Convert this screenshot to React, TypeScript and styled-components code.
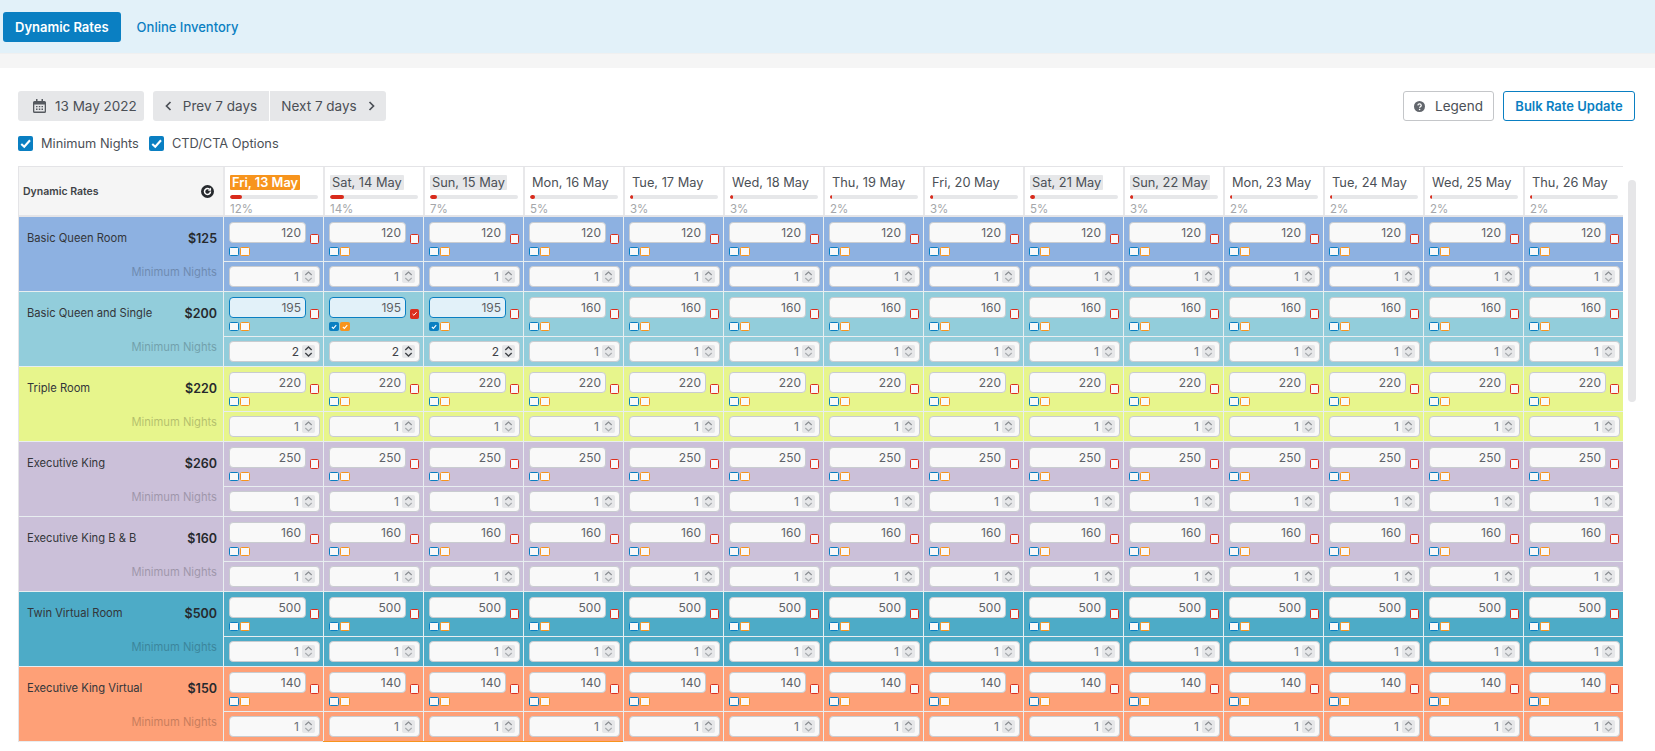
import React from "react";
import styled, { createGlobalStyle } from "styled-components";

const GlobalStyle = createGlobalStyle`
  html, body {
    margin: 0;
    padding: 0;
    height: 751px;
    overflow: hidden;
    background: #fff;
    font-family: Inter, "Liberation Sans", sans-serif;
    color: #4b4f56;
  }
  * { box-sizing: border-box; }
`;

const days = [
  { label: "Fri, 13 May", pct: 12, chip: "today" },
  { label: "Sat, 14 May", pct: 14, chip: "weekend" },
  { label: "Sun, 15 May", pct: 7, chip: "weekend" },
  { label: "Mon, 16 May", pct: 5 },
  { label: "Tue, 17 May", pct: 3 },
  { label: "Wed, 18 May", pct: 3 },
  { label: "Thu, 19 May", pct: 2 },
  { label: "Fri, 20 May", pct: 3 },
  { label: "Sat, 21 May", pct: 5, chip: "weekend" },
  { label: "Sun, 22 May", pct: 3, chip: "weekend" },
  { label: "Mon, 23 May", pct: 2 },
  { label: "Tue, 24 May", pct: 2 },
  { label: "Wed, 25 May", pct: 2 },
  { label: "Thu, 26 May", pct: 2 },
];

const rooms = [
  { name: "Basic Queen Room", price: "$125", rate: 120, bg: "#8db1e1" },
  { name: "Basic Queen and Single", price: "$200", rate: 160, bg: "#92cddb", special: true },
  { name: "Triple Room", price: "$220", rate: 220, bg: "#e7f58c" },
  { name: "Executive King", price: "$260", rate: 250, bg: "#cbc0d9" },
  { name: "Executive King B & B", price: "$160", rate: 160, bg: "#cbc0d9" },
  { name: "Twin Virtual Room", price: "$500", rate: 500, bg: "#4dabc7" },
  { name: "Executive King Virtual", price: "$150", rate: 140, bg: "#fea077" },
];

const Tick = () => (
  <svg viewBox="0 0 12 12" width="100%" height="100%" fill="none">
    <path d="M2.6 6.4 5 8.6 9.6 3.4" stroke="#fff" strokeWidth="1.7" />
  </svg>
);

const CalendarIcon = () => (
  <svg width="13" height="14" viewBox="0 0 13 14" fill="#55595f">
    <path d="M3 0h1.5v2h4V0H10v2h1.5A1.5 1.5 0 0 1 13 3.500V12.500A1.500 1.500 0 0 1 11.500 14h-10A1.500 1.500 0 0 1 0 12.500V3.500A1.500 1.500 0 0 1 1.500 2H3zM1.300 5.500v7h10.400v-7z" />
    <path d="M3 7h1.500v1.300H3zM5.800 7h1.500v1.300H5.800zM8.500 7H10v1.300H8.500zM3 9.600h1.500v1.300H3zM5.800 9.600h1.500v1.300H5.800zM8.500 9.600H10v1.300H8.500z" />
  </svg>
);

const Chevron = ({ dir }: { dir: "left" | "right" }) => (
  <svg width="7" height="10" viewBox="0 0 7 10" fill="none" stroke="#4b4f56" strokeWidth="1.700">
    <path d={dir === "left" ? "M5.500 1 1.500 5l4 4" : "M1.500 1l4 4-4 4"} />
  </svg>
);

const HelpIcon = () => (
  <svg width="11" height="11" viewBox="0 0 24 24">
    <circle cx="12" cy="12" r="12" fill="#62666c" />
    <path d="M8.300 9.300a3.800 3.800 0 0 1 7.500.5c0 2.500-3.600 2.800-3.600 5" fill="none" stroke="#fff" strokeWidth="2.800" />
    <circle cx="12.200" cy="18.600" r="1.700" fill="#fff" />
  </svg>
);

const RefreshIcon = () => (
  <svg width="13" height="13" viewBox="0 0 24 24">
    <circle cx="12" cy="12" r="12" fill="#26292d" />
    <path d="M17.500 12a5.500 5.500 0 1 1-1.800-4.100" fill="none" stroke="#fff" strokeWidth="2.800" />
    <path d="M18.600 4.600v5.900h-5.900z" fill="#fff" />
  </svg>
);

const Stepper = () => (
  <StepBox>
    <svg width="9" height="13" viewBox="0 0 9 13" fill="none" strokeWidth="1.200">
      <path d="M1.300 5 4.500 2l3.200 3" stroke="#8a8d92" />
      <path d="M1.300 8 4.500 11l3.200-3" stroke="#a9acb0" />
    </svg>
  </StepBox>
);

const Stepper2 = () => (
  <StepBox>
    <svg width="9" height="13" viewBox="0 0 9 13" fill="none" strokeWidth="1.400">
      <path d="M1.300 5 4.500 2l3.200 3" stroke="#3f4347" />
      <path d="M1.300 8 4.500 11l3.200-3" stroke="#3f4347" />
    </svg>
  </StepBox>
);

export default function App() {
  return (
    <>
      <GlobalStyle />
      <TopBar>
        <ActiveTab>Dynamic Rates</ActiveTab>
        <Tab>Online Inventory</Tab>
      </TopBar>
      <Strip />
      <Content>
        <Toolbar>
          <DateButton>
            <CalendarIcon />
            13 May 2022
          </DateButton>
          <NavGroup>
            <NavButton>
              <Chevron dir="left" />
              Prev 7 days
            </NavButton>
            <NavButton>
              Next 7 days
              <Chevron dir="right" />
            </NavButton>
          </NavGroup>
          <Spacer />
          <LegendButton>
            <HelpIcon />
            Legend
          </LegendButton>
          <BulkButton>Bulk Rate Update</BulkButton>
        </Toolbar>
        <Options>
          <Option>
            <BigCheck>
              <Tick />
            </BigCheck>
            Minimum Nights
          </Option>
          <Option>
            <BigCheck>
              <Tick />
            </BigCheck>
            CTD/CTA Options
          </Option>
        </Options>
        <TableWrap>
          <ScrollThumb />
          <HeadRow>
            <HeadTitle>
              Dynamic Rates
              <RefreshIcon />
            </HeadTitle>
            {days.map((d) => (
              <DayHead key={d.label}>
                <DayLabel $chip={d.chip}>{d.label}</DayLabel>
                <Bar>
                  <BarFill style={{ width: `${Math.max(d.pct * 1.1, 1)}%` }} />
                </Bar>
                <Pct>{d.pct}%</Pct>
              </DayHead>
            ))}
          </HeadRow>
          {rooms.map((room, r) => (
            <Row key={room.name} $bg={room.bg}>
              <RoomCell>
                <RoomTop>
                  <RoomName>{room.name}</RoomName>
                  <RoomPrice>{room.price}</RoomPrice>
                </RoomTop>
                <MinLabel>Minimum Nights</MinLabel>
              </RoomCell>
              {days.map((d, i) => {
                const changed = !!room.special && i < 3;
                const last = r === rooms.length - 1;
                return (
                  <DayCell key={d.label} $edge={last ? (i >= 1 && i <= 3 ? "#f7941d" : "#e4e4e7") : "transparent"}>
                    <RateRow>
                      <RateMain>
                        <RateInput $active={changed}>{changed ? 195 : room.rate}</RateInput>
                        <SmallChecks>
                          <SmallCheck $color="#0a7fc2" $checked={changed && i > 0}>
                            {changed && i > 0 && <Tick />}
                          </SmallCheck>
                          <SmallCheck $color="#f7941d" $checked={changed && i === 1}>
                            {changed && i === 1 && <Tick />}
                          </SmallCheck>
                        </SmallChecks>
                      </RateMain>
                      <SmallCheck $color="#dc2f1e" $checked={changed && i === 1}>
                        {changed && i === 1 && <Tick />}
                      </SmallCheck>
                    </RateRow>
                    <MinRow>
                      <MinInput $dark={changed}>
                        {changed ? 2 : 1}
                        {changed ? <Stepper2 /> : <Stepper />}
                      </MinInput>
                    </MinRow>
                  </DayCell>
                );
              })}
            </Row>
          ))}
        </TableWrap>
      </Content>
    </>
  );
}

const TopBar = styled.div`
  display: flex;
  align-items: center;
  height: 53px;
  padding: 0 3px;
  gap: 4px;
  background: #e2f1f9;
`;

const ActiveTab = styled.div`
  display: flex;
  align-items: center;
  height: 30px;
  padding: 0 12px;
  border-radius: 3px;
  background: #0a7fc2;
  color: #fff;
  font-size: 13px;
  font-weight: 600;
`;

const Tab = styled.div`
  padding: 0 12px;
  color: #0a7fc2;
  font-size: 13px;
  font-weight: 500;
`;

const Strip = styled.div`
  height: 15px;
  background: #f5f5f5;
  border-top: 1px solid #f0f0f0;
`;

const Content = styled.div`
  padding: 23px 0 0 18px;
  width: 1635px;
`;

const Toolbar = styled.div`
  display: flex;
  align-items: center;
  height: 30px;
`;

const Spacer = styled.div`
  flex: 1;
`;

const DateButton = styled.div`
  display: flex;
  align-items: center;
  gap: 9px;
  height: 30px;
  width: 126px;
  padding-left: 15px;
  border-radius: 3px;
  background: #e6e7e9;
  font-size: 13.500px;
  white-space: nowrap;
`;

const NavGroup = styled.div`
  display: flex;
  gap: 1px;
  margin-left: 9px;
`;

const NavButton = styled.div`
  display: flex;
  align-items: center;
  justify-content: center;
  gap: 11px;
  width: 116px;
  height: 30px;
  background: #e6e7e9;
  font-size: 13.500px;
  white-space: nowrap;

  &:first-child {
    border-radius: 3px 0 0 3px;
  }
  &:last-child {
    border-radius: 0 3px 3px 0;
  }
`;

const LegendButton = styled.div`
  display: flex;
  align-items: center;
  justify-content: center;
  gap: 10px;
  width: 91px;
  height: 30px;
  margin-right: 9px;
  border: 1px solid #c4c6c9;
  border-radius: 3px;
  font-size: 13.500px;
`;

const BulkButton = styled.div`
  display: flex;
  align-items: center;
  justify-content: center;
  width: 132px;
  height: 30px;
  border: 1px solid #0a7fc2;
  border-radius: 3px;
  color: #0a7fc2;
  font-size: 13px;
  font-weight: 600;
`;

const Options = styled.div`
  display: flex;
  align-items: center;
  gap: 10px;
  height: 15px;
  margin-top: 15px;
`;

const Option = styled.div`
  display: flex;
  align-items: center;
  gap: 8px;
  font-size: 12.800px;
`;

const BigCheck = styled.div`
  width: 15px;
  height: 15px;
  border-radius: 2px;
  background: #0a7fc2;
`;

const TableWrap = styled.div`
  position: relative;
  margin-top: 15px;
  width: 1605px;
  border-top: 1px solid #e4e4e7;
  border-left: 1px solid #e4e4e7;
`;

const ScrollThumb = styled.div`
  position: absolute;
  left: 1609px;
  top: 13px;
  width: 8px;
  height: 222px;
  border-radius: 4px;
  background: #e6e6e8;
`;

const HeadRow = styled.div`
  display: flex;
  height: 50px;
  border-bottom: 2px solid #e4e4e7;
`;

const HeadTitle = styled.div`
  display: flex;
  align-items: center;
  justify-content: space-between;
  width: 204px;
  padding: 0 9px 0 4px;
  background: #f5f5f5;
  color: #3f4347;
  font-size: 10.500px;
  font-weight: 600;
`;

const DayHead = styled.div`
  width: 100px;
  padding: 4px 5px 0;
  border-left: 2px solid #e8e8ea;
  background: #fff;
`;

const DayLabel = styled.div<{ $chip?: string }>`
  display: inline-block;
  height: 15px;
  padding: 0 2px;
  border-radius: 1px;
  line-height: 15px;
  font-size: 12.800px;
  white-space: nowrap;
  background: ${(p) => (p.$chip === "today" ? "#f7941d" : p.$chip === "weekend" ? "#e6e7e9" : "transparent")};
  color: ${(p) => (p.$chip === "today" ? "#fff" : "#4b4f56")};
  font-weight: ${(p) => (p.$chip === "today" ? 600 : 400)};
`;

const Bar = styled.div`
  height: 4px;
  margin-top: 4px;
  border-radius: 2px;
  overflow: hidden;
  background: #e6e7e9;
`;

const BarFill = styled.div`
  height: 100%;
  border-radius: 2px;
  background: #d92b1c;
`;

const Pct = styled.div`
  margin-top: 3px;
  color: #a4a6a9;
  font-size: 11.500px;
  line-height: 14px;
`;

const Row = styled.div<{ $bg: string }>`
  display: flex;
  height: 75px;
  background: ${(p) => p.$bg};
  border-bottom: 1px solid #e8eef0;
`;

const RoomCell = styled.div`
  width: 204px;
  padding: 0 6px 0 8px;
`;

const RoomTop = styled.div`
  display: flex;
  align-items: center;
  justify-content: space-between;
  height: 42px;
`;

const RoomName = styled.div`
  color: #33363a;
  font-size: 11.200px;
`;

const RoomPrice = styled.div`
  color: #26292d;
  font-size: 12.500px;
  font-weight: 600;
`;

const MinLabel = styled.div`
  margin-top: 6px;
  color: #000;
  opacity: 0.22;
  font-size: 11.200px;
  text-align: right;
`;

const DayCell = styled.div<{ $edge: string }>`
  width: 100px;
  border-left: 1px solid #e8eef0;
  box-shadow: 0 1px 0 ${(p) => p.$edge};
`;

const RateRow = styled.div`
  display: flex;
  align-items: center;
  gap: 4px;
  height: 45px;
  padding: 0 4px 0 5px;
  border-bottom: 1px solid #e8eef0;
`;

const RateMain = styled.div`
  display: flex;
  flex-direction: column;
  gap: 4px;
  margin-top: 0;
`;

const RateInput = styled.div<{ $active?: boolean }>`
  width: 77px;
  height: 21px;
  padding-right: 4px;
  border: 1px solid ${(p) => (p.$active ? "#0a7fc2" : "#c9ccd0")};
  border-radius: 4px;
  background: ${(p) => (p.$active ? "#e2f1f9" : "#f9f9f9")};
  color: #5d6166;
  font-size: 12px;
  line-height: 19px;
  text-align: right;
`;

const SmallChecks = styled.div`
  display: flex;
  gap: 1px;
`;

const SmallCheck = styled.div<{ $color: string; $checked?: boolean }>`
  width: 10px;
  height: 9.500px;
  border: 1px solid ${(p) => p.$color};
  border-radius: 1.500px;
  background: ${(p) => (p.$checked ? p.$color : "#f9f9f9")};
  line-height: 0;
`;

const MinRow = styled.div`
  display: flex;
  align-items: center;
  height: 29px;
  padding-left: 5px;
`;

const MinInput = styled.div<{ $dark?: boolean }>`
  display: flex;
  align-items: center;
  justify-content: flex-end;
  gap: 3px;
  width: 91px;
  height: 21px;
  padding-right: 4px;
  border: 1px solid #c9ccd0;
  border-radius: 4px;
  background: #f9f9f9;
  color: ${(p) => (p.$dark ? "#3f4347" : "#6d7176")};
  font-size: 12px;
`;

const StepBox = styled.div`
  display: flex;
  align-items: center;
  justify-content: center;
  width: 13px;
  height: 13px;
  border-radius: 2px;
  background: #e6e7e9;
`;
